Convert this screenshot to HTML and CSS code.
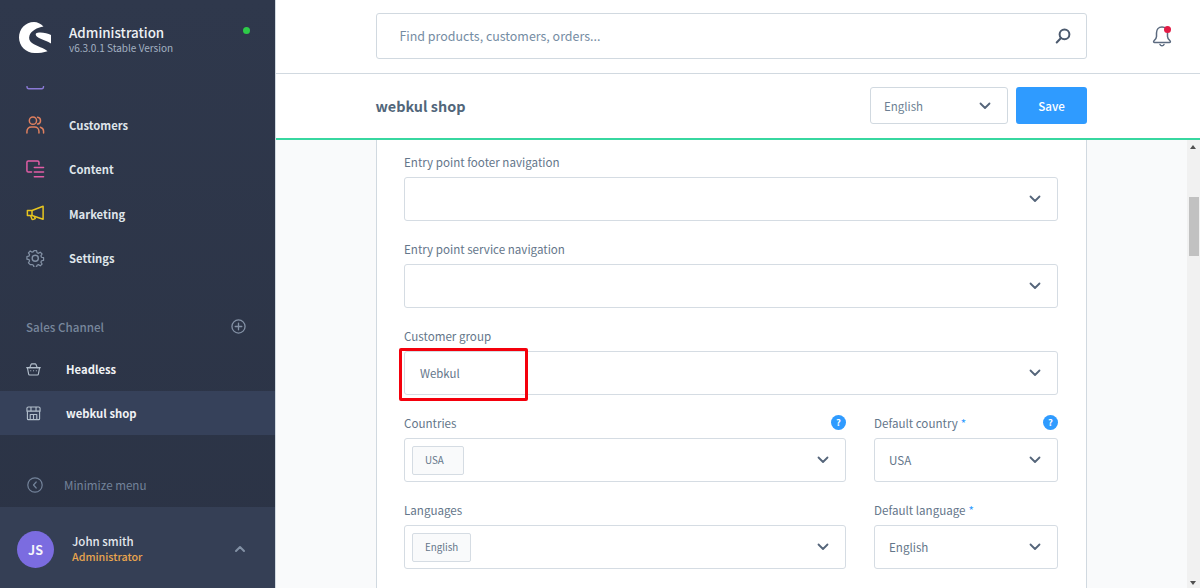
FILE: index.html
```html
<!DOCTYPE html>
<html lang="en">
<head>
<meta charset="utf-8">
<title>webkul shop</title>
<link rel="stylesheet" href="styles.css">
</head>
<body>
<div class="app">
  <aside class="sidebar">
    <header class="brand">
      <svg class="logo" viewBox="0 0 32 32"><path fill="#fff" d="M24.500 4.500C21.500 1.500 18.500 0 15 0 6.500 0 0 7 0 15.500 0 24 7 31 15.500 31c4.700 0 9.500-.4 13-1.800C25 26 18 24.500 13 21 10.500 19.200 9.500 16.500 10.500 13.500 12 9 18 5.500 24.500 4.500z"/><path fill="#fff" d="M17 11.500C19 9.500 28 10.500 32 13V21.500C28 18.500 23.500 18 20 16 18 15 16 13 17 11.500z"/></svg>
      <div class="brand-text">
        <div class="brand-title">Administration</div>
        <div class="brand-version">v6.3.0.1 Stable Version</div>
      </div>
      <span class="status"></span>
    </header>

    <nav class="nav">
      <div class="nav-cut"><svg class="nav-sliver" viewBox="0 0 20 5" fill="none" stroke="#8a7ad6" stroke-width="1.500" stroke-linecap="round"><path d="M1 .5c0 1.500.7 2.500 2 2.500h14c1.300 0 2-1 2-2.500"/></svg></div>
      <a class="nav-item"><svg class="nav-icon" viewBox="0 0 20 20" fill="none" stroke="#e0805f" stroke-width="1.600" stroke-linecap="round"><circle cx="7.500" cy="5" r="3.900"/><path d="M1 18.500v-1.800c0-2.700 2-4.700 4.600-4.700h3.800c2.600 0 4.600 2 4.600 4.700v1.800"/><path d="M12.500 1.300c1.900.3 3.200 1.900 3.200 3.700s-1.300 3.400-3.200 3.700"/><path d="M15.500 12.200c2.100.5 3.500 2.300 3.500 4.400v1.900"/></svg><span>Customers</span></a>
      <a class="nav-item"><svg class="nav-icon" viewBox="0 0 20 20" fill="none" stroke="#e25da6" stroke-width="1.600" stroke-linecap="round"><path d="M14 5V2.500C14 1.700 13.300 1 12.500 1h-10C1.700 1 1 1.700 1 2.500v9C1 12.300 1.700 13 2.500 13H6"/><path d="M9 8h10M9 13h10M9 18h10"/></svg><span>Content</span></a>
      <a class="nav-item"><svg class="nav-icon" viewBox="0 0 20 20" fill="none" stroke="#e8c61f" stroke-width="1.600" stroke-linejoin="round"><path d="M18.500 2.500v14l-12-4H1.500V7h5z"/><path d="M6.500 7v5.500M5 12.500l1.200 3.300c.3.700 1.100 1 1.800.8l2-.8-.7-1.900"/></svg><span>Marketing</span></a>
      <a class="nav-item"><svg class="nav-icon" viewBox="0 0 20 20" fill="none" stroke="#8391a5" stroke-width="1.500" stroke-linejoin="round"><circle cx="10" cy="10" r="3.300"/><path d="M8.400 1h3.200l.5 2.500 1.700.7 2.200-1.400 2.200 2.200-1.400 2.200.7 1.700 2.500.5v3.200l-2.500.5-.7 1.700 1.400 2.200-2.200 2.200-2.200-1.400-1.700.7-.5 2.500H8.400l-.5-2.500-1.700-.7L4 17.800 1.800 15.600l1.400-2.200-.7-1.700L0 11.200V8l2.500-.5.700-1.700L1.800 3.600 4 1.400l2.200 1.400 1.700-.7z" transform="translate(1 .9) scale(.9)"/></svg><span>Settings</span></a>
    </nav>

    <section class="channels">
      <div class="channels-head">
        <span>Sales Channel</span>
        <svg class="plus" viewBox="0 0 16 16" fill="none" stroke="#8391a5" stroke-width="1.400" stroke-linecap="round"><circle cx="8" cy="8" r="7"/><path d="M8 4.500v7M4.500 8h7"/></svg>
      </div>
      <a class="channel"><svg class="channel-icon" viewBox="0 0 16 16" fill="none" stroke="#b3bfcc" stroke-width="1.200" stroke-linejoin="round" stroke-linecap="round"><path d="M1.500 6h13l-1.300 7c-.1.500-.5.800-1 .8H3.800c-.5 0-.9-.3-1-.8z"/><path d="M.8 6h14.400"/><path d="M4 6l1.500-3.500c.1-.3.300-.5.700-.5h3.600c.4 0 .6.200.7.500L12 6"/><path d="M5 9.300h.1M8 9.300h.1M11 9.300h.1"/></svg><span>Headless</span></a>
      <a class="channel active"><svg class="channel-icon" viewBox="0 0 16 16" fill="none" stroke="#b3bfcc" stroke-width="1.200" stroke-linejoin="round"><path d="M1.500 5.500v8c0 .6.400 1 1 1h11c.6 0 1-.4 1-1v-8"/><path d="M1 5.500V2.500C1 1.700 1.700 1 2.500 1h11c.8 0 1.500.7 1.500 1.500v3z"/><path d="M5.300 1v4.500M10.700 1v4.500"/><path d="M4.500 14.500V9h7v5.500M8 9v5.500"/></svg><span>webkul shop</span></a>
    </section>

    <div class="minimize">
      <svg class="minimize-icon" viewBox="0 0 16 16" fill="none" stroke="#73839a" stroke-width="1.200" stroke-linecap="round" stroke-linejoin="round"><circle cx="8" cy="8" r="7.200"/><path d="M9.200 5L6.500 8l2.700 3"/></svg>
      <span>Minimize menu</span>
    </div>

    <footer class="user">
      <div class="avatar">JS</div>
      <div class="user-text">
        <div class="user-name">John smith</div>
        <div class="user-role">Administrator</div>
      </div>
      <svg class="user-caret" viewBox="0 0 12 8" fill="none" stroke="#8391a5" stroke-width="2" stroke-linecap="round" stroke-linejoin="round"><path d="M2 6l4-4 4 4"/></svg>
    </footer>
  </aside>

  <main class="main">
    <div class="topbar">
      <div class="search">
        <span>Find products, customers, orders...</span>
        <svg class="search-icon" viewBox="0 0 16 16" fill="none" stroke="#4c5a6e" stroke-width="2" stroke-linecap="round"><circle cx="9.500" cy="6.300" r="4.900"/><path d="M6 10L1.700 14.500"/></svg>
      </div>
      <div class="bell">
        <svg viewBox="0 0 20 22" fill="none" stroke="#5b6a7f" stroke-width="1.500" stroke-linejoin="round" stroke-linecap="round"><path d="M10 2C6.500 2 4.500 4.800 4.500 8v3.500c0 1.800-1 3-2.500 4.300-.8.700-.3 1.700.6 1.700h14.800c.9 0 1.400-1 .6-1.700-1.500-1.300-2.500-2.500-2.500-4.300V8C15.500 4.800 13.500 2 10 2z"/><path d="M8 19.500c.4.900 1.100 1.300 2 1.300s1.600-.4 2-1.300"/></svg>
        <span class="bell-dot"></span>
      </div>
    </div>

    <div class="smartbar">
      <h1 class="smart-title">webkul shop</h1>
      <div class="smart-actions">
        <div class="lang">
          <span>English</span>
          <svg class="chev" viewBox="0 0 12 8"><path d="M1.500 1.500L6 6l4.500-4.500"/></svg>
        </div>
        <button class="save">Save</button>
      </div>
    </div>

    <div class="scroller">
      <div class="content">
        <div class="card">
          <div class="field">
            <label>Entry point footer navigation</label>
            <div class="select"><svg class="chev" viewBox="0 0 12 8"><path d="M1.500 1.500L6 6l4.500-4.500"/></svg></div>
          </div>
          <div class="field">
            <label>Entry point service navigation</label>
            <div class="select"><svg class="chev" viewBox="0 0 12 8"><path d="M1.500 1.500L6 6l4.500-4.500"/></svg></div>
          </div>
          <div class="field">
            <label>Customer group</label>
            <div class="select">
              <span class="value small">Webkul</span>
              <svg class="chev" viewBox="0 0 12 8"><path d="M1.500 1.500L6 6l4.500-4.500"/></svg>
              <span class="redbox"></span>
            </div>
          </div>
          <div class="row">
            <div class="field wide">
              <label>Countries <svg class="help" viewBox="0 0 16 16"><circle cx="8" cy="8" r="8" fill="#2f9bff"/><text x="8" y="11.500" text-anchor="middle" class="help-q">?</text></svg></label>
              <div class="select tags">
                <span class="tag tag-usa">USA</span>
                <svg class="chev" viewBox="0 0 12 8"><path d="M1.500 1.500L6 6l4.500-4.500"/></svg>
              </div>
            </div>
            <div class="field narrow">
              <label>Default country <em>*</em> <svg class="help" viewBox="0 0 16 16"><circle cx="8" cy="8" r="8" fill="#2f9bff"/><text x="8" y="11.500" text-anchor="middle" class="help-q">?</text></svg></label>
              <div class="select">
                <span class="value">USA</span>
                <svg class="chev" viewBox="0 0 12 8"><path d="M1.500 1.500L6 6l4.500-4.500"/></svg>
              </div>
            </div>
          </div>
          <div class="row">
            <div class="field wide">
              <label>Languages</label>
              <div class="select tags">
                <span class="tag">English</span>
                <svg class="chev" viewBox="0 0 12 8"><path d="M1.500 1.500L6 6l4.500-4.500"/></svg>
              </div>
            </div>
            <div class="field narrow">
              <label>Default language <em>*</em></label>
              <div class="select">
                <span class="value">English</span>
                <svg class="chev" viewBox="0 0 12 8"><path d="M1.500 1.500L6 6l4.500-4.500"/></svg>
              </div>
            </div>
          </div>
        </div>
      </div>
      <div class="scrollbar">
        <span class="arrow up"></span>
        <span class="thumb"></span>
        <span class="arrow down"></span>
      </div>
    </div>
  </main>
</div>
</body>
</html>
```
FILE: styles.css
```css
* { box-sizing: border-box; }
html, body { margin: 0; height: 100%; overflow: hidden; }
body { font-family: "Noto Sans CJK SC", "Noto Sans", sans-serif; color: #52667a; background: #fff; }
.app { display: flex; width: 1200px; height: 588px; overflow: hidden; }

/* Sidebar */
.sidebar { width: 276px; flex: none; display: flex; flex-direction: column; background: linear-gradient(#2f384c, #2b3345); border-right: 1px solid #d1d9e0; color: #e9edf0; }
.brand { height: 73px; flex: none; display: flex; align-items: center; padding: 0 24px 0 19px; }
.logo { width: 32px; height: 32px; flex: none; margin-top: 2px; }
.brand-text { margin-left: 18px; margin-top: 5px; }
.brand-title { font-size: 13.400px; font-weight: 500; line-height: 18px; color: #eef1f4; }
.brand-version { font-size: 10px; line-height: 14px; color: #a3b1c2; }
.status { width: 7px; height: 7px; border-radius: 50%; background: #2dcb48; margin-left: auto; margin-top: -12px; margin-right: 1px; }

.nav { flex: none; height: 207px; overflow: hidden; }
.nav-cut { height: 30px; padding: 13px 0 0 26px; }
.nav-sliver { display: block; width: 18.500px; height: 4.600px; }
.nav-item { height: 44.300px; display: flex; align-items: center; padding-left: 26px; font-size: 11.250px; font-weight: 700; color: #dfe5ea; }
.nav-icon { width: 18.500px; height: 18.500px; flex: none; margin-right: 24.500px; }

.channels { flex: none; margin-top: 25px; }
.channels-head { height: 42px; display: flex; align-items: center; justify-content: space-between; padding: 0 29px 0 26px; font-size: 11.650px; font-weight: 500; color: #78879c; }
.plus { width: 15px; height: 15px; }
.channel { height: 44px; display: flex; align-items: center; padding-left: 26px; font-size: 11.300px; font-weight: 700; color: #f0f2f5; }
.channel.active { background: #36415a; }
.channel-icon { width: 15px; height: 15px; flex: none; margin-right: 25px; }

.minimize { height: 72px; flex: none; display: flex; align-items: center; padding: 28px 0 0 27px; font-size: 11.600px; color: #73839a; }
.minimize-icon { width: 16px; height: 16px; margin-right: 21px; }

.user { flex: 1; display: flex; align-items: center; padding: 3px 29px 0 17px; background: #353f55; }
.avatar { width: 37px; height: 37px; border-radius: 50%; background: #7b6ce0; color: #f5f5fb; display: flex; align-items: center; justify-content: center; font-size: 12.500px; font-weight: 700; flex: none; }
.user-text { margin-left: 18px; }
.user-name { font-size: 11.500px; font-weight: 500; line-height: 16px; color: #e4e8ed; }
.user-role { font-size: 10.700px; font-weight: 500; line-height: 16px; color: #e9a54e; }
.user-caret { width: 12px; height: 8px; margin-left: auto; }

/* Main */
.main { flex: 1; min-width: 0; display: flex; flex-direction: column; }
.topbar { height: 74px; flex: none; display: flex; align-items: center; padding: 0 28px 0 99.500px; border-bottom: 1px solid #d1d9e0; }
.search { width: 711.500px; height: 46px; margin-top: -1px; border: 1px solid #d1d9e0; border-radius: 3px; display: flex; align-items: center; justify-content: space-between; padding: 0 15px 0 23px; font-size: 12.450px; color: #758ca3; }
.search-icon { width: 16px; height: 16px; }
.bell { position: relative; width: 20px; height: 22px; margin-left: auto; margin-top: -2px; }
.bell svg { display: block; width: 20px; height: 22px; }
.bell-dot { position: absolute; top: 1px; right: 1px; width: 7px; height: 7px; border-radius: 50%; background: #e21b45; }

.smartbar { height: 64px; flex: none; display: flex; align-items: center; justify-content: space-between; padding: 0 113px 1px 99.500px; }
.smart-title { margin: 0; font-size: 14.400px; font-weight: 700; color: #52667a; }
.smart-actions { display: flex; gap: 8px; align-items: center; }
.lang { width: 138px; height: 37px; border: 1px solid #d1d9e0; border-radius: 3px; display: flex; align-items: center; justify-content: space-between; padding: 0 16px 0 13px; font-size: 11.500px; color: #6c7f93; }
.save { width: 71px; height: 37px; border: 0; border-radius: 3px; background: #2f9bff; color: #fff; font: 500 11.600px "Noto Sans CJK SC", sans-serif; }
.chev { width: 12px; height: 8px; flex: none; fill: none; stroke: #55657a; stroke-width: 1.800; stroke-linecap: round; stroke-linejoin: round; }

.scroller { flex: 1; min-height: 0; display: flex; border-top: 2px solid #37d7a0; }
.content { flex: 1; min-width: 0; background: #f9fafb; padding: 0 100px; overflow: hidden; }
.card { width: 711px; height: 100%; background: #fff; border-left: 1px solid #d1d9e0; border-right: 1px solid #d1d9e0; padding: 12px 28px 0 27px; display: flex; flex-direction: column; gap: 18px; }
.field label { display: flex; align-items: center; gap: 3px; height: 19.500px; margin-bottom: 5.500px; font-size: 11.600px; color: #64768a; }
.field label em { font-style: normal; color: #2f9bff; }
.select { position: relative; height: 44px; border: 1px solid #d5dce3; border-radius: 3px; display: flex; align-items: center; justify-content: flex-end; padding: 0 16px 0 15px; background: #fff; }
.narrow .select { padding-left: 14px; }
.value { margin-right: auto; font-size: 11.600px; color: #64768a; }
.value.small { font-size: 11.400px; }
.select.tags { padding-left: 7px; }
.tag { margin-right: auto; height: 29px; display: flex; align-items: center; padding: 0 12px; border: 1px solid #d5dce3; border-radius: 2px; background: #f9fafb; font-size: 9.800px; color: #64768a; }
.tag-usa { width: 52px; }
.row { display: flex; gap: 28px; }
.wide { width: 442px; flex: none; }
.narrow { flex: 1; }
.help { width: 15px; height: 15px; flex: none; margin-left: auto; }
.help-q { font: 700 10px "Noto Sans CJK SC", sans-serif; fill: #fff; }
.redbox { position: absolute; left: -6px; top: -4px; width: 129px; height: 53px; border: 3px solid #f4000c; border-radius: 2px; pointer-events: none; }

.scrollbar { width: 13px; flex: none; background: #f1f1f1; position: relative; }
.thumb { position: absolute; top: 57px; left: 2px; width: 10px; height: 59px; background: #c1c1c1; }
.arrow { position: absolute; left: 3px; width: 0; height: 0; border-left: 3.500px solid transparent; border-right: 3.500px solid transparent; }
.arrow.up { top: 5px; border-bottom: 4px solid #505050; }
.arrow.down { bottom: 3px; border-top: 4px solid #505050; }
```
